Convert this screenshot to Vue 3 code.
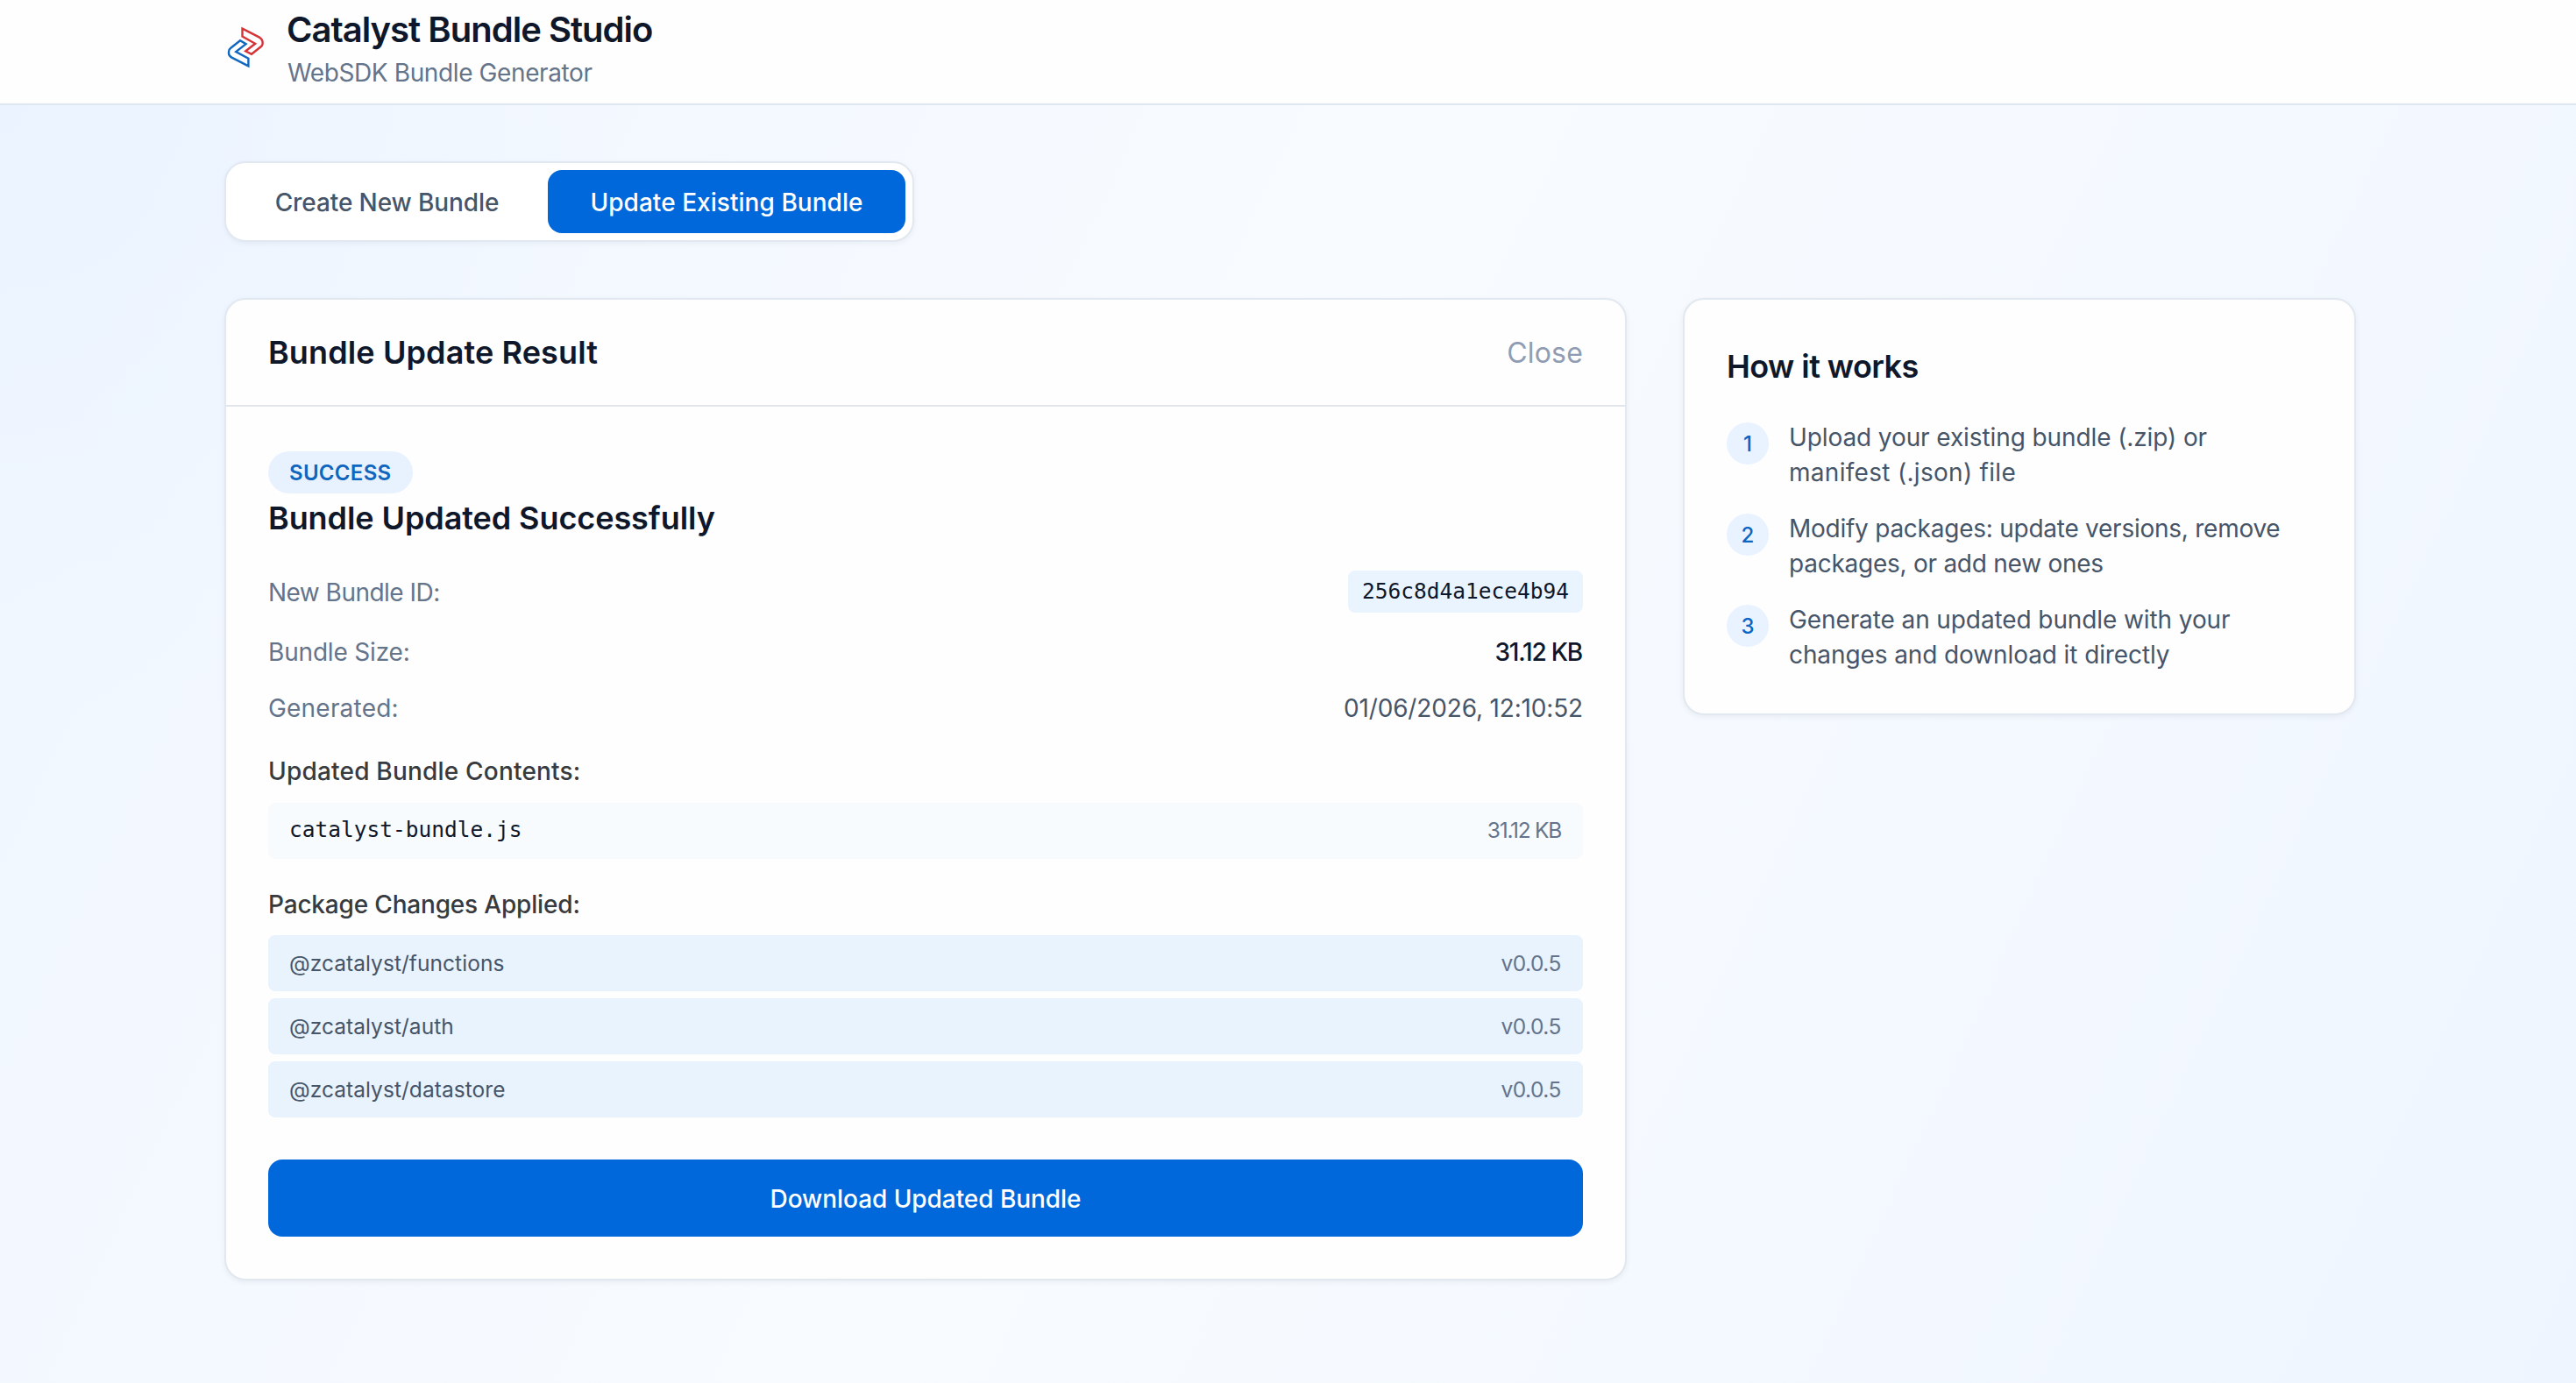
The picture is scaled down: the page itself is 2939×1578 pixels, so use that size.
<template>
  <div class="page">
    <header class="header">
      <svg class="logo" viewBox="0 0 48 48" fill="none" stroke-width="2.4">
        <path
          stroke="#d63337"
          d="M20.5 2.6 39.5 12.4Q43.6 14.8 43.6 18.4V20Q43.6 21.6 42 23L31 31.8 24.2 28.4 35.2 19.8 20.5 11.6Z"
        />
        <path
          stroke="#1168c0"
          d="M27.4 45.4 8.4 35.6Q5 33.6 5 31V29Q5 26.4 7 25L18 16.2 24.6 20.2 13.2 29 27.4 36.8Z"
        />
      </svg>
      <div class="brand">
        <h1 class="brand-title">Catalyst Bundle Studio</h1>
        <p class="brand-subtitle">WebSDK Bundle Generator</p>
      </div>
    </header>

    <main class="main">
      <nav class="tabs">
        <button
          v-for="tab in tabs"
          :key="tab.id"
          class="tab"
          :class="[tab.id, { active: activeTab === tab.id }]"
          @click="activeTab = tab.id"
        >
          {{ tab.label }}
        </button>
      </nav>

      <div class="columns">
        <section class="card result">
          <div class="result-header">
            <h2 class="result-title">Bundle Update Result</h2>
            <button class="close">Close</button>
          </div>

          <div class="result-body">
            <span class="badge">SUCCESS</span>
            <h3 class="success-title">Bundle Updated Successfully</h3>

            <div class="details">
              <div class="detail">
                <span class="label label-id">New Bundle ID:</span>
                <code class="bundle-id">256c8d4a1ece4b94</code>
              </div>
              <div class="detail">
                <span class="label">Bundle Size:</span>
                <span class="size">31.12 KB</span>
              </div>
              <div class="detail">
                <span class="label label-generated">Generated:</span>
                <span class="date">01/06/2026, 12:10:52</span>
              </div>
            </div>

            <h4 class="list-title contents-title">Updated Bundle Contents:</h4>
            <div class="file">
              <code class="file-name">catalyst-bundle.js</code>
              <span class="file-size">31.12 KB</span>
            </div>

            <h4 class="list-title changes-title">Package Changes Applied:</h4>
            <div class="packages">
              <div v-for="pkg in packages" :key="pkg.name" class="package">
                <span>{{ pkg.name }}</span>
                <span class="version">{{ pkg.version }}</span>
              </div>
            </div>

            <button class="download">Download Updated Bundle</button>
          </div>
        </section>

        <aside class="card help">
          <h3 class="help-title">How it works</h3>
          <ol class="steps">
            <li v-for="(step, index) in steps" :key="index" class="step">
              <span class="step-number">{{ index + 1 }}</span>
              <p class="step-text">
                <span v-for="line in step" :key="line" class="line">{{ line }}</span>
              </p>
            </li>
          </ol>
        </aside>
      </div>
    </main>
  </div>
</template>

<script setup>
import { ref } from 'vue';

const activeTab = ref('update');

const tabs = [
  { id: 'create', label: 'Create New Bundle' },
  { id: 'update', label: 'Update Existing Bundle' }
];

const packages = [
  { name: '@zcatalyst/functions', version: 'v0.0.5' },
  { name: '@zcatalyst/auth', version: 'v0.0.5' },
  { name: '@zcatalyst/datastore', version: 'v0.0.5' }
];

const steps = [
  ['Upload your existing bundle (.zip) or', 'manifest (.json) file'],
  ['Modify packages: update versions, remove', 'packages, or add new ones'],
  ['Generate an updated bundle with your', 'changes and download it directly']
];
</script>

<style>
body {
  margin: 0;
}
</style>

<style scoped>
.page {
  display: flex;
  flex-direction: column;
  min-height: 100vh;
  font-family: Inter, 'Liberation Sans', sans-serif;
  font-size: 28px;
  line-height: 40px;
  color: #0f172a;
  background: #f8fbff;
}

.page * {
  box-sizing: border-box;
}

h1,
h2,
h3,
h4,
p,
ol {
  margin: 0;
  padding: 0;
}

button {
  font: inherit;
  border: 0;
  padding: 0;
  background: none;
  cursor: pointer;
}

.header {
  display: flex;
  gap: 24px;
  height: 120px;
  padding: 9px 256px 0;
  background: #fefefe;
  border-bottom: 2px solid #dfe8f1;
}

.logo {
  width: 48px;
  height: 48px;
  margin-top: 21px;
}

.brand-title {
  margin-left: -1px;
  font-size: 40px;
  line-height: 49px;
  font-weight: 600;
  letter-spacing: -0.99px;
}

.brand-subtitle {
  margin-top: 5px;
  line-height: 41px;
  letter-spacing: -0.39px;
  color: #64748b;
}

.main {
  flex: 1;
  padding: 64px 251px 64px 256px;
  background:
    radial-gradient(circle at 0 0, rgba(228, 240, 255, 0.45), rgba(228, 240, 255, 0) 700px),
    linear-gradient(115deg, #eff6ff 0%, #f8fbff 45%, #f4f9ff 70%, #eef5ff 100%);
}

.tabs {
  display: flex;
  gap: 8px;
  width: max-content;
  padding: 8px;
  background: #fff;
  border: 2px solid #e2e8f0;
  border-radius: 24px;
  box-shadow: 0 2px 6px rgba(15, 23, 42, 0.05);
}

.tab {
  height: 72px;
  padding-top: 2px;
  font-weight: 500;
  color: #475569;
  border-radius: 16px;
}

.tab.create {
  width: 351px;
  letter-spacing: -0.1px;
}

.tab.update {
  width: 408px;
  letter-spacing: 0.04px;
}

.tab.active {
  color: #fff;
  background: #0068da;
}

.columns {
  display: flex;
  align-items: flex-start;
  gap: 64px;
  margin-top: 64px;
}

.card {
  background: #fefefe;
  border: 2px solid #e2e8f0;
  border-radius: 24px;
  box-shadow: 0 2px 6px rgba(15, 23, 42, 0.06);
}

.result {
  width: 1600px;
}

.result-header {
  display: flex;
  align-items: center;
  justify-content: space-between;
  height: 122px;
  padding: 0 48px;
  border-bottom: 2px solid #e2e6ea;
}

.result-title {
  font-size: 36px;
  font-weight: 600;
  letter-spacing: 0.12px;
}

.close {
  margin-top: 2px;
  font-size: 32px;
  letter-spacing: 0.2px;
  color: #8f9cb3;
}

.result-body {
  display: flex;
  flex-direction: column;
  padding: 51px 48px 48px;
}

.badge {
  align-self: flex-start;
  height: 48px;
  padding: 1px 24px 0;
  font-size: 24px;
  line-height: 48px;
  font-weight: 600;
  letter-spacing: 0.3px;
  color: #1065bd;
  background: #e8f2fe;
  border-radius: 24px;
}

.success-title {
  margin-top: 4px;
  font-size: 36px;
  line-height: 48px;
  font-weight: 600;
  letter-spacing: -0.08px;
}

.details {
  display: flex;
  flex-direction: column;
  gap: 24px;
  margin-top: 36px;
}

.detail {
  display: flex;
  align-items: center;
  justify-content: space-between;
}

.detail:first-child {
  margin-bottom: 1px;
}

.label {
  letter-spacing: -0.18px;
  color: #64748b;
}

.label-id {
  padding-top: 2px;
  letter-spacing: -0.52px;
}

.label-generated {
  letter-spacing: 0.2px;
}

.bundle-id {
  height: 48px;
  padding: 0 16px;
  font-family: 'DejaVu Sans Mono', monospace;
  font-size: 24.5px;
  line-height: 48px;
  background: #eaf4ff;
  border-radius: 8px;
}

.size {
  margin-right: 1px;
  font-weight: 500;
  letter-spacing: -1.21px;
}

.date {
  letter-spacing: -0.16px;
  color: #475569;
}

.list-title {
  margin-top: 32px;
  font-size: 28px;
  font-weight: 500;
  color: #373b40;
}

.contents-title {
  letter-spacing: 0.2px;
}

.changes-title {
  letter-spacing: -0.18px;
}

.file,
.package {
  display: flex;
  align-items: center;
  justify-content: space-between;
  height: 64px;
  padding: 0 24px;
  font-size: 24.5px;
  color: #475569;
  border-radius: 8px;
}

.file {
  margin-top: 16px;
  background: #f8fbfe;
}

.file-name {
  padding-bottom: 2px;
  font-family: 'DejaVu Sans Mono', monospace;
  color: #0f172a;
}

.file-size {
  margin-right: 1px;
  padding-bottom: 2px;
  letter-spacing: -1.27px;
  color: #64748b;
}

.packages {
  display: flex;
  flex-direction: column;
  gap: 8px;
  margin-top: 15px;
}

.package {
  background: #e8f3fe;
  letter-spacing: 0.05px;
}

.version {
  margin-right: 1px;
  letter-spacing: -0.48px;
  color: #64748b;
}

.download {
  height: 88px;
  margin-top: 48px;
  padding-top: 2px;
  font-weight: 500;
  letter-spacing: -0.06px;
  color: #fff;
  background: #0068da;
  border-radius: 16px;
}

.help {
  width: 768px;
  padding: 52px 48px 47px;
}

.help-title {
  font-size: 36px;
  line-height: 48px;
  font-weight: 600;
  letter-spacing: -0.56px;
}

.steps {
  display: flex;
  flex-direction: column;
  gap: 24px;
  margin-top: 37px;
  list-style: none;
}

.step {
  display: flex;
  gap: 23px;
}

.step-number {
  flex: none;
  width: 48px;
  height: 48px;
  margin-top: 3px;
  padding-top: 1px;
  font-size: 24px;
  line-height: 48px;
  font-weight: 500;
  text-align: center;
  color: #0b66c3;
  background: #e8f3ff;
  border-radius: 50%;
}

.step-text {
  color: #475569;
  letter-spacing: -0.1px;
}

.line {
  display: block;
  white-space: nowrap;
}

.step:first-child .line:last-child {
  letter-spacing: 0.3px;
}

.step:nth-child(2) .line {
  letter-spacing: -0.25px;
}
</style>
